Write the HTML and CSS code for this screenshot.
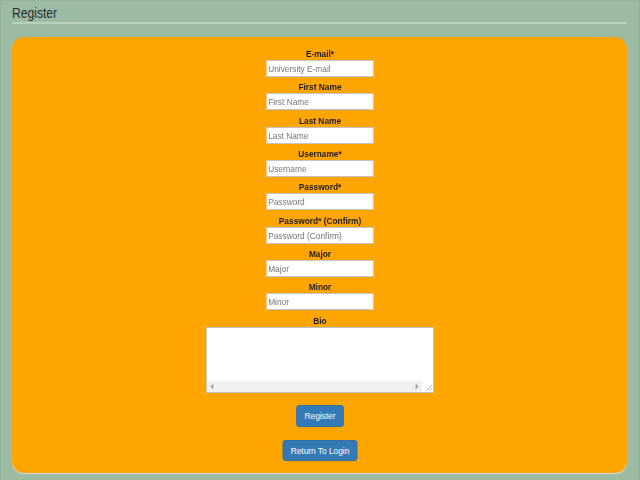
FILE: index.html
```html
<!DOCTYPE html>
<html lang="en">
<head>
<meta charset="utf-8">
<title>Register</title>
<link rel="stylesheet" href="styles.css">
</head>
<body>
<div class="page">
  <h1 class="title"><span class="title-text">Register</span></h1>
  <div class="rule"></div>
  <form class="panel">
    <div class="scaler">
      <div class="field">
        <label class="lbl" for="email">E-mail*</label>
        <input class="inp" id="email" type="text" placeholder="University E-mail">
      </div>
      <div class="field">
        <label class="lbl" for="first">First Name</label>
        <input class="inp" id="first" type="text" placeholder="First Name">
      </div>
      <div class="field">
        <label class="lbl" for="last">Last Name</label>
        <input class="inp" id="last" type="text" placeholder="Last Name">
      </div>
      <div class="field">
        <label class="lbl" for="user">Username*</label>
        <input class="inp" id="user" type="text" placeholder="Username">
      </div>
      <div class="field">
        <label class="lbl" for="pw">Password*</label>
        <input class="inp" id="pw" type="text" placeholder="Password">
      </div>
      <div class="field">
        <label class="lbl" for="pw2">Password* (Confirm)</label>
        <input class="inp" id="pw2" type="text" placeholder="Password (Confirm)">
      </div>
      <div class="field">
        <label class="lbl" for="major">Major</label>
        <input class="inp" id="major" type="text" placeholder="Major">
      </div>
      <div class="field">
        <label class="lbl" for="minor">Minor</label>
        <input class="inp" id="minor" type="text" placeholder="Minor">
      </div>
      <div class="field bio-field">
        <label class="lbl" for="bio">Bio</label>
        <div class="bio">
          <textarea class="bio-text" id="bio" wrap="off"></textarea>
          <div class="hscroll">
            <span class="arrow"><svg width="13" height="11" viewBox="0 0 13 11"><path d="M4 5.5 L7.5 2.5 L7.5 8.5 Z" fill="#a3a3a3"/></svg></span>
            <span class="track"></span>
            <span class="arrow"><svg width="13" height="11" viewBox="0 0 13 11"><path d="M9 5.5 L5.5 2.5 L5.5 8.5 Z" fill="#a3a3a3"/></svg></span>
            <span class="corner"><svg width="13" height="11" viewBox="0 0 13 11"><path d="M12 4 L5 10 M12 7 L8.5 10" stroke="#a8a8a8" stroke-width="1"/></svg></span>
          </div>
        </div>
      </div>
      <div class="btn-row"><button class="btn" type="button">Register</button></div>
      <div class="btn-row second"><button class="btn" type="button">Return To Login</button></div>
    </div>
  </form>
</div>
</body>
</html>
```

FILE: styles.css
```css
html, body {
  margin: 0;
  padding: 0;
}
body {
  background: #9cbba3;
  font-family: "Liberation Sans", Arial, sans-serif;
  width: 640px;
  height: 480px;
  overflow: hidden;
  box-shadow: inset 1px 1px 0 #94b39b, inset -1px 0 0 #90af97;
}
.page {
  padding: 0 13px 0 12px;
}
.title {
  margin: 5px 0 0 0;
  font-size: 14.6px;
  line-height: 17px;
  font-weight: normal;
  color: #2b2b2b;
}
.title-text {
  display: inline-block;
  transform: scaleX(0.83);
  transform-origin: left center;
}
.rule {
  height: 2px;
  background: #bcd0bf;
}
.panel {
  margin-top: 13px;
  background: #ffa500;
  border-radius: 12px;
  box-shadow: 0 1px 1px #d6dbe6;
  padding: 11px 0 12px 0;
  display: flex;
  flex-direction: column;
  align-items: center;
}
.scaler {
  display: flex;
  flex-direction: column;
  align-items: center;
  transform: scaleX(0.85);
  transform-origin: center top;
}
.field {
  display: flex;
  flex-direction: column;
  align-items: center;
  margin-bottom: 4.33px;
}
.lbl {
  font-size: 9.8px;
  line-height: 12px;
  font-weight: bold;
  color: #1e1e1e;
}
.inp {
  box-sizing: border-box;
  width: 126px;
  height: 17px;
  margin: 0;
  border: 1px solid #c4c4c4;
  padding: 0 1px;
  font-family: "Liberation Sans", Arial, sans-serif;
  font-size: 9.8px;
  background: #fff;
  outline: none;
}
.inp::placeholder {
  color: #777;
}
.bio-field {
  margin-bottom: 12px;
}
.bio {
  box-sizing: border-box;
  width: 268px;
  height: 66px;
  border: 1px solid #b7c2cf;
  background: #fff;
  display: flex;
  flex-direction: column;
}
.bio-text {
  flex: 1;
  border: none;
  margin: 0;
  padding: 1px;
  resize: none;
  overflow: hidden;
  outline: none;
  font-family: "Liberation Sans", Arial, sans-serif;
  font-size: 9.8px;
}
.hscroll {
  height: 11px;
  display: flex;
}
.arrow {
  width: 13px;
  height: 11px;
  background: #f1f1f1;
  display: block;
}
.arrow svg, .corner svg {
  display: block;
}
.track {
  flex: 1;
  background: #f1f1f1;
}
.corner {
  width: 13px;
  height: 11px;
  background: #fff;
  display: block;
}
.btn-row {
  display: flex;
  justify-content: center;
}
.btn-row.second {
  margin-top: 13px;
}
.btn {
  box-sizing: border-box;
  height: 22px;
  padding: 0 8.8px;
  margin: 0;
  border: 1px solid #2e6da4;
  border-radius: 3px;
  background: #337ab7;
  color: #fff;
  font-family: "Liberation Sans", Arial, sans-serif;
  font-size: 9.8px;
  line-height: 20px;
}
.btn-row.second .btn {
  height: 21px;
  line-height: 19px;
}
```
